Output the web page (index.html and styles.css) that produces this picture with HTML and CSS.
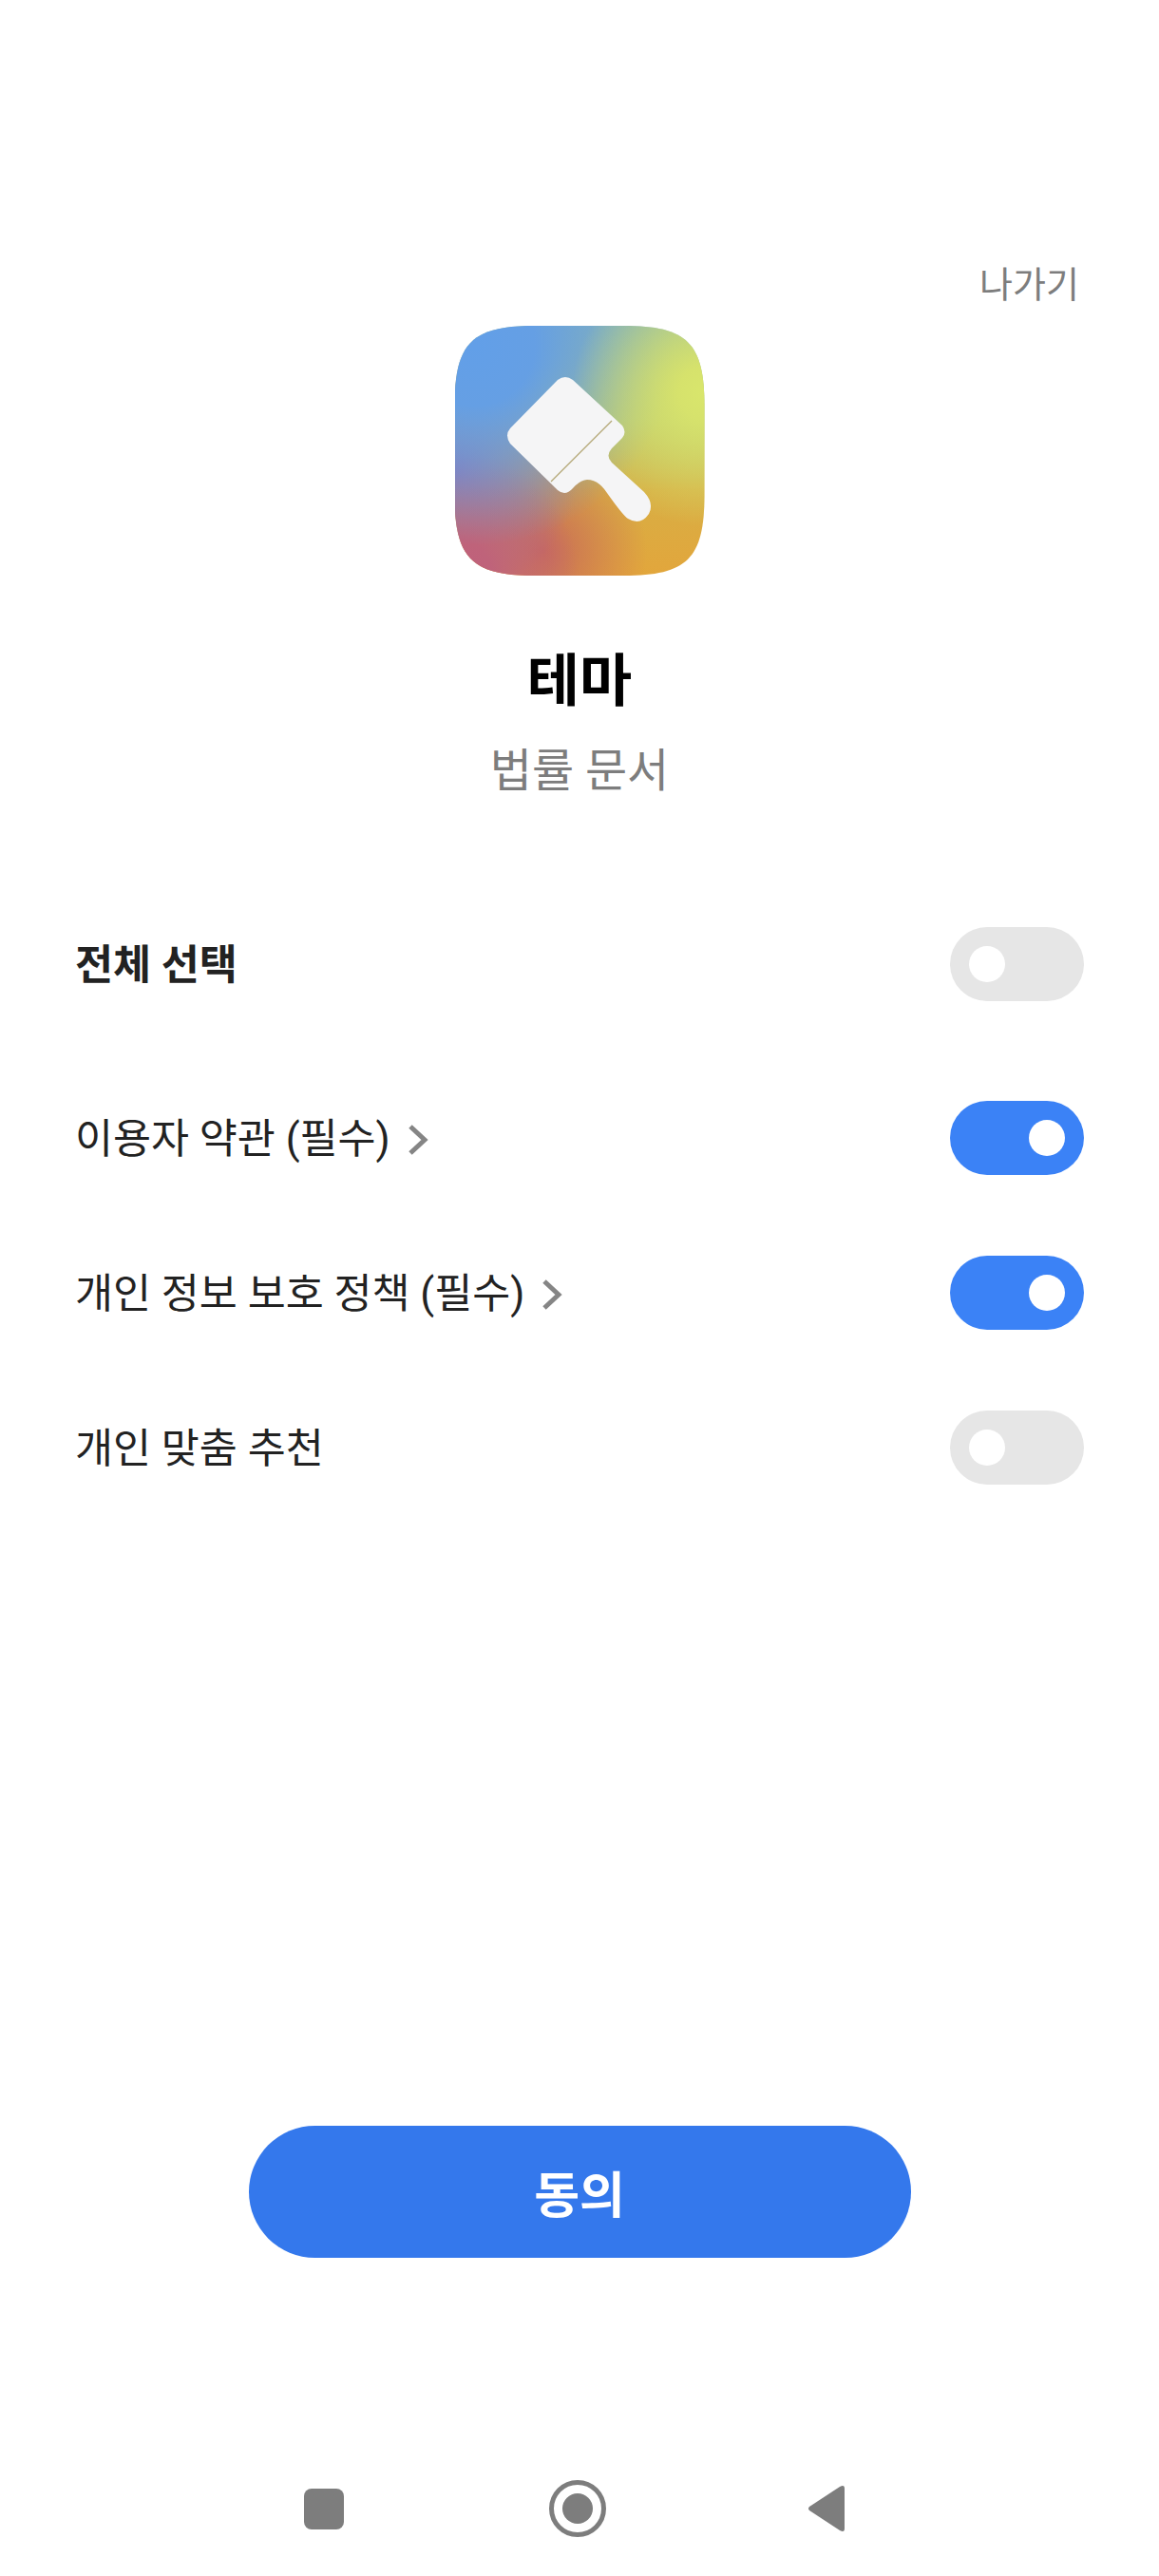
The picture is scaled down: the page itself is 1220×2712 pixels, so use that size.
FILE: index.html
```html
<!DOCTYPE html>
<html lang="ko">
<head>
<meta charset="utf-8">
<title>테마</title>
<link rel="stylesheet" href="styles.css">
</head>
<body>
<main class="screen">
  <div class="skip-row"><span class="skip">나가기</span></div>
  <div class="app-icon">
    <svg class="brush" viewBox="0 0 263 263" aria-hidden="true">
      <path fill="#f5f5f6" d="M108 57 Q116 51 124 57 L176 105 Q181 112 176 118 L165 129 Q158 137 165 144 L199 175 Q210 187 204 198 Q195 211 182 203 Q177 200 160 176 Q151 162 139 162 Q131 163 124 171 Q116 180 108 173 L58 124 Q52 115 58 108 Z"/>
      <path fill="none" stroke="#b5a878" stroke-width="1.3" d="M101 164 L165 100"/>
    </svg>
  </div>
  <h1 class="title">테마</h1>
  <p class="subtitle">법률 문서</p>
  <section class="options">
    <div class="row row-all">
      <span class="label label-bold">전체 선택</span>
      <span class="toggle"><span class="thumb"></span></span>
    </div>
    <div class="row">
      <span class="label">이용자 약관 (필수)<svg class="chev" viewBox="0 0 22 34"><path d="M3 3 L18 17 L3 31" fill="none" stroke="#858585" stroke-width="5"/></svg></span>
      <span class="toggle on"><span class="thumb"></span></span>
    </div>
    <div class="row">
      <span class="label">개인 정보 보호 정책 (필수)<svg class="chev" viewBox="0 0 22 34"><path d="M3 3 L18 17 L3 31" fill="none" stroke="#858585" stroke-width="5"/></svg></span>
      <span class="toggle on"><span class="thumb"></span></span>
    </div>
    <div class="row">
      <span class="label">개인 맞춤 추천</span>
      <span class="toggle"><span class="thumb"></span></span>
    </div>
  </section>
  <div class="spacer"></div>
  <button class="agree">동의</button>
  <nav class="navbar">
    <svg class="nav-square" viewBox="0 0 42 43"><rect x="0" y="0" width="42" height="43" rx="8" fill="#7d7d7d"/></svg>
    <svg class="nav-home" viewBox="0 0 60 60"><circle cx="30" cy="30" r="27.5" fill="none" stroke="#7d7d7d" stroke-width="5"/><circle cx="30" cy="30" r="16" fill="#7d7d7d"/></svg>
    <svg class="nav-back" viewBox="0 0 40 50"><path d="M37 1 Q39 1 39 4 L39 46 Q39 49 37 49 Q36 49 34 48 L2 27 Q0 25 2 23 L34 2 Q36 1 37 1 Z" fill="#7d7d7d"/></svg>
  </nav>
</main>
</body>
</html>
```
FILE: styles.css
```css
* { box-sizing: border-box; }
html, body { margin: 0; padding: 0; background: #fff; }
.screen {
  width: 1220px;
  height: 2712px;
  display: flex;
  flex-direction: column;
  align-items: center;
  font-family: Roboto, "Noto Sans CJK KR", "Noto Sans", sans-serif;
  color: #222;
}
.skip-row {
  align-self: stretch;
  display: flex;
  justify-content: flex-end;
  padding: 270px 84px 0 0;
  height: 343px;
}
.skip { font-size: 38px; line-height: 60px; color: #7d7d7d; }
.app-icon {
  position: relative;
  width: 263px;
  height: 263px;
  flex: none;
  clip-path: path("M0 85 C0 18 18 0 85 0 H178 C245 0 263 18 263 85 V178 C263 245 245 263 178 263 H85 C18 263 0 245 0 178 Z");
  background:
    radial-gradient(circle 140px at 100% 27%, #d9e66c 0%, #d6e26c 20%, rgba(214, 226, 108, 0) 100%),
    radial-gradient(circle 210px at 8% 8%, #629fe8 0%, #659fe4 30%, rgba(101, 159, 228, 0) 100%),
    radial-gradient(circle 130px at 0% 100%, #c0607c 0%, #bf637a 30%, rgba(191, 99, 122, 0) 100%),
    radial-gradient(circle 130px at 0% 58%, #8f70ae 0%, rgba(143, 112, 174, 0) 100%),
    radial-gradient(circle 110px at 35% 90%, #c86a58 0%, rgba(200, 106, 88, 0) 100%),
    linear-gradient(180deg, #8fb8a8 0%, #b8c470 38%, #d8ae44 66%, #e2a63c 100%);
}
.brush { position: absolute; inset: 0; width: 263px; height: 263px; }
.title {
  margin: 67px 0 0;
  font-size: 60px;
  line-height: 90px;
  font-weight: 700;
  color: #000;
}
.subtitle {
  margin: 14px 0 0;
  font-size: 48px;
  line-height: 70px;
  color: #7d7d7d;
}
.options {
  align-self: stretch;
  margin-top: 129px;
  padding: 0 79px;
  display: flex;
  flex-direction: column;
  gap: 85px;
}
.options .row-all { margin-bottom: 20px; }
.row {
  display: flex;
  align-items: center;
  justify-content: space-between;
  height: 78px;
}
.label { display: flex; align-items: center; padding-top: 4px; font-size: 43.5px; line-height: 60px; color: #222; }
.label-bold { font-weight: 700; }
.chev { width: 22px; height: 34px; margin-left: 18px; flex: none; }
.toggle {
  width: 141px;
  height: 78px;
  border-radius: 39px;
  background: #e6e6e6;
  padding: 20px;
  display: flex;
  justify-content: flex-start;
}
.toggle.on { background: #3b82f6; justify-content: flex-end; }
.thumb { width: 38px; height: 38px; border-radius: 50%; background: #fff; display: block; }
.spacer { flex: 1; }
.agree {
  width: 697px;
  height: 139px;
  border: 0;
  border-radius: 70px;
  background: #3478ec;
  color: #fff;
  font-family: inherit;
  font-size: 52px;
  font-weight: 700;
  flex: none;
}
.navbar {
  margin-top: 234px;
  height: 60px;
  margin-bottom: 41px;
  align-self: stretch;
  display: flex;
  align-items: center;
  padding-left: 320px;
  flex: none;
}
.nav-square { width: 42px; height: 43px; flex: none; }
.nav-home { width: 60px; height: 60px; margin-left: 216px; flex: none; }
.nav-back { width: 40px; height: 50px; margin-left: 212px; flex: none; }
```
